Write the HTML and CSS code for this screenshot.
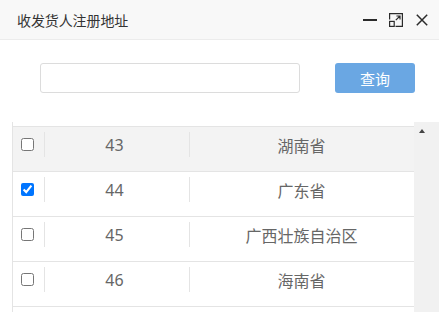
FILE: index.html
```html
<!DOCTYPE html>
<html lang="zh-CN">
<head>
<meta charset="utf-8">
<title>收发货人注册地址</title>
<link rel="stylesheet" href="styles.css">
</head>
<body>
<div class="win">
  <div class="titlebar">
    <span class="title">收发货人注册地址</span>
    <div class="ctrls">
      <svg class="ic ic-min" width="14" height="14" viewBox="0 0 14 14"><line x1="0" y1="7" x2="14" y2="7" stroke="#2b2b2b" stroke-width="2"/></svg>
      <svg class="ic ic-max" width="14" height="14" viewBox="0 0 14 14" fill="none" stroke="#2b2b2b" stroke-width="1.2">
        <path d="M0.6 6.5V0.6H13.4V13.4H6.5"/>
        <rect x="0.6" y="8.4" width="4.6" height="5"/>
        <path d="M6.8 7.2L11 3M7.4 3H11V6.6"/>
      </svg>
      <svg class="ic ic-close" width="12" height="12" viewBox="0 0 12 12"><path d="M0.8 0.8L11.2 11.2M11.2 0.8L0.8 11.2" stroke="#2b2b2b" stroke-width="1.5"/></svg>
    </div>
  </div>
  <div class="toolbar">
    <input class="search" type="text">
    <button class="btn" type="button">查询</button>
  </div>
  <div class="grid-wrap">
    <div class="grid">
      <div class="row hover">
        <div class="cell c-chk"><input type="checkbox"></div>
        <div class="cell c-num">43</div>
        <div class="cell c-name">湖南省</div>
      </div>
      <div class="row">
        <div class="cell c-chk"><input type="checkbox" checked></div>
        <div class="cell c-num">44</div>
        <div class="cell c-name">广东省</div>
      </div>
      <div class="row">
        <div class="cell c-chk"><input type="checkbox"></div>
        <div class="cell c-num">45</div>
        <div class="cell c-name">广西壮族自治区</div>
      </div>
      <div class="row">
        <div class="cell c-chk"><input type="checkbox"></div>
        <div class="cell c-num">46</div>
        <div class="cell c-name">海南省</div>
      </div>
      <div class="row-end"></div>
    </div>
    <div class="scrollbar"><span class="arrow"></span></div>
  </div>
</div>
</body>
</html>
```

FILE: styles.css
```css
* { box-sizing: border-box; }
html, body { margin: 0; padding: 0; background: #fff; }
body {
  width: 439px;
  height: 312px;
  overflow: hidden;
  font-family: "Noto Sans", "Noto Sans CJK SC", sans-serif;
}
.win { width: 439px; height: 312px; overflow: hidden; }
.titlebar {
  height: 40px;
  background: #f8f8f8;
  border-bottom: 1px solid #ececec;
  display: flex;
  align-items: center;
  padding-left: 17px;
}
.title {
  font-size: 14px;
  color: #333;
  letter-spacing: -0.1px;
}
.ctrls {
  margin-left: auto;
  display: flex;
  align-items: center;
  padding-right: 11px;
  padding-top: 1px;
}
.ic { display: block; }
.ic-min { margin-right: 12px; }
.ic-max { margin-right: 13px; }
.toolbar {
  display: flex;
  align-items: flex-start;
  padding: 23px 0 0 40px;
  height: 82px;
}
.search {
  width: 260px;
  height: 30px;
  border: 1px solid #dcdcdc;
  border-radius: 3px;
  margin: 0;
  padding: 0 8px;
  outline: none;
}
.btn {
  margin-left: 35px;
  width: 80px;
  height: 30px;
  border: none;
  border-radius: 3px;
  background: #6aa7e3;
  color: #fff;
  font-family: "Noto Sans CJK SC", sans-serif;
  font-size: 15px;
  padding: 0;
}
.grid-wrap {
  display: flex;
  margin-left: 12px;
  height: 190px;
}
.grid {
  width: 402px;
  border-left: 1px solid #e4e4e4;
  padding-top: 4px;
}
.row {
  display: flex;
  height: 45px;
  border-top: 1px solid #e4e4e4;
  padding-top: 5px;
  font-size: 16px;
  color: #666;
}
.row-end { border-top: 1px solid #e4e4e4; height: 6px; }
.row.hover { background: #f3f3f3; }
.cell {
  height: 25px;
  display: flex;
  align-items: center;
  justify-content: center;
}
.c-chk { width: 31px; justify-content: flex-start; padding-left: 8px; }
.c-chk input { margin: 0; width: 13px; height: 13px; }
.c-num { width: 145px; border-left: 1px solid #e4e4e4; padding-right: 5px; }
.c-name { flex: 1; border-left: 1px solid #e4e4e4; padding-right: 1px; }
.scrollbar {
  width: 25px;
  background: #f1f1f1;
  position: relative;
}
.arrow {
  position: absolute;
  left: 5px;
  top: 7px;
  width: 0;
  height: 0;
  border-left: 3.5px solid transparent;
  border-right: 3.5px solid transparent;
  border-bottom: 4px solid #444;
}
```
